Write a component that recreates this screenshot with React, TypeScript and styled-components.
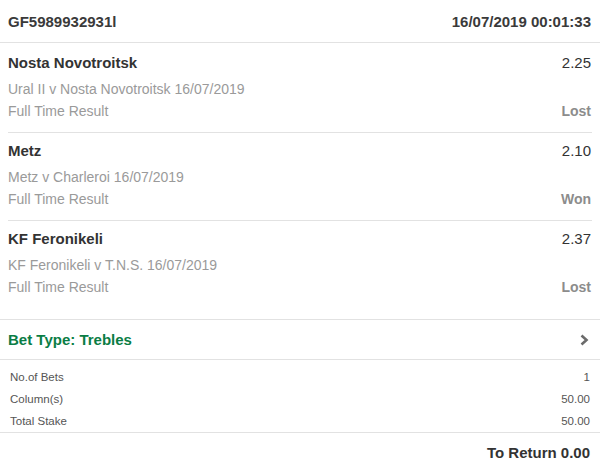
import React from 'react';
import styled, { createGlobalStyle } from 'styled-components';

interface SelectionData {
  name: string;
  odds: string;
  event: string;
  market: string;
  result: string;
}

const selections: SelectionData[] = [
  { name: 'Nosta Novotroitsk', odds: '2.25', event: 'Ural II v Nosta Novotroitsk 16/07/2019', market: 'Full Time Result', result: 'Lost' },
  { name: 'Metz', odds: '2.10', event: 'Metz v Charleroi 16/07/2019', market: 'Full Time Result', result: 'Won' },
  { name: 'KF Feronikeli', odds: '2.37', event: 'KF Feronikeli v T.N.S. 16/07/2019', market: 'Full Time Result', result: 'Lost' },
];

const summary = [
  { label: 'No.of Bets', value: '1' },
  { label: 'Column(s)', value: '50.00' },
  { label: 'Total Stake', value: '50.00' },
];

const GlobalStyle = createGlobalStyle`
  body {
    margin: 0;
    background: #fff;
    font-family: "Liberation Sans", Arial, sans-serif;
  }
`;

const Slip = styled.div`
  width: 600px;
  background: #fff;
  color: #333;
`;

const Header = styled.div`
  height: 42px;
  display: flex;
  align-items: center;
  justify-content: space-between;
  padding: 0 9px 0 8px;
  border-bottom: 1px solid #e2e2e2;
  font-size: 15px;
  font-weight: bold;
  color: #3a3a3a;
`;

const SelectionList = styled.div`
  padding: 2px 0 11px;
  border-bottom: 1px solid #e2e2e2;
`;

const Selection = styled.div`
  margin: 0 8px;
  padding: 6px 1px 10px 0;
  border-bottom: 1px solid #e2e2e2;

  &:last-child {
    border-bottom: none;
  }
`;

const Row = styled.div`
  display: flex;
  justify-content: space-between;
  align-items: center;
  height: 22px;
`;

const Name = styled.span`
  font-size: 15px;
  font-weight: bold;
  color: #333;
`;

const Odds = styled.span`
  font-size: 15px;
  color: #333;
`;

const Event = styled.div`
  margin-top: 5px;
  line-height: 22px;
  font-size: 14px;
  color: #9a9a9a;
`;

const Market = styled.span`
  font-size: 14px;
  color: #9a9a9a;
`;

const Result = styled.span`
  font-size: 14px;
  font-weight: bold;
  color: #8c8c8c;
`;

const BetType = styled.div`
  height: 39px;
  display: flex;
  align-items: center;
  justify-content: space-between;
  padding: 0 11px 0 8px;
  border-bottom: 1px solid #e2e2e2;
  font-size: 15px;
  font-weight: bold;
  color: #0a7d45;
`;

const Summary = styled.div`
  padding: 6px 10px 0 10px;
  border-bottom: 1px solid #e2e2e2;
`;

const SummaryRow = styled.div`
  display: flex;
  justify-content: space-between;
  line-height: 22px;
  font-size: 11.5px;
  color: #555;
`;

const Footer = styled.div`
  height: 38px;
  display: flex;
  align-items: center;
  justify-content: flex-end;
  padding: 0 10px;
  font-size: 15px;
  font-weight: bold;
  color: #333;
`;

const Chevron = () => (
  <svg width="10" height="12" viewBox="0 0 10 12">
    <path d="M2.5 1.5 L7.5 6 L2.5 10.5" fill="none" stroke="#6b6b6b" strokeWidth="2.6" />
  </svg>
);

export default function App() {
  return (
    <Slip>
      <GlobalStyle />
      <Header>
        <span>GF5989932931l</span>
        <span>16/07/2019 00:01:33</span>
      </Header>
      <SelectionList>
        {selections.map((s, i) => (
          <Selection key={i}>
            <Row>
              <Name>{s.name}</Name>
              <Odds>{s.odds}</Odds>
            </Row>
            <Event>{s.event}</Event>
            <Row>
              <Market>{s.market}</Market>
              <Result>{s.result}</Result>
            </Row>
          </Selection>
        ))}
      </SelectionList>
      <BetType>
        <span>Bet Type: Trebles</span>
        <Chevron />
      </BetType>
      <Summary>
        {summary.map((r) => (
          <SummaryRow key={r.label}>
            <span>{r.label}</span>
            <span>{r.value}</span>
          </SummaryRow>
        ))}
      </Summary>
      <Footer>To Return 0.00</Footer>
    </Slip>
  );
}
